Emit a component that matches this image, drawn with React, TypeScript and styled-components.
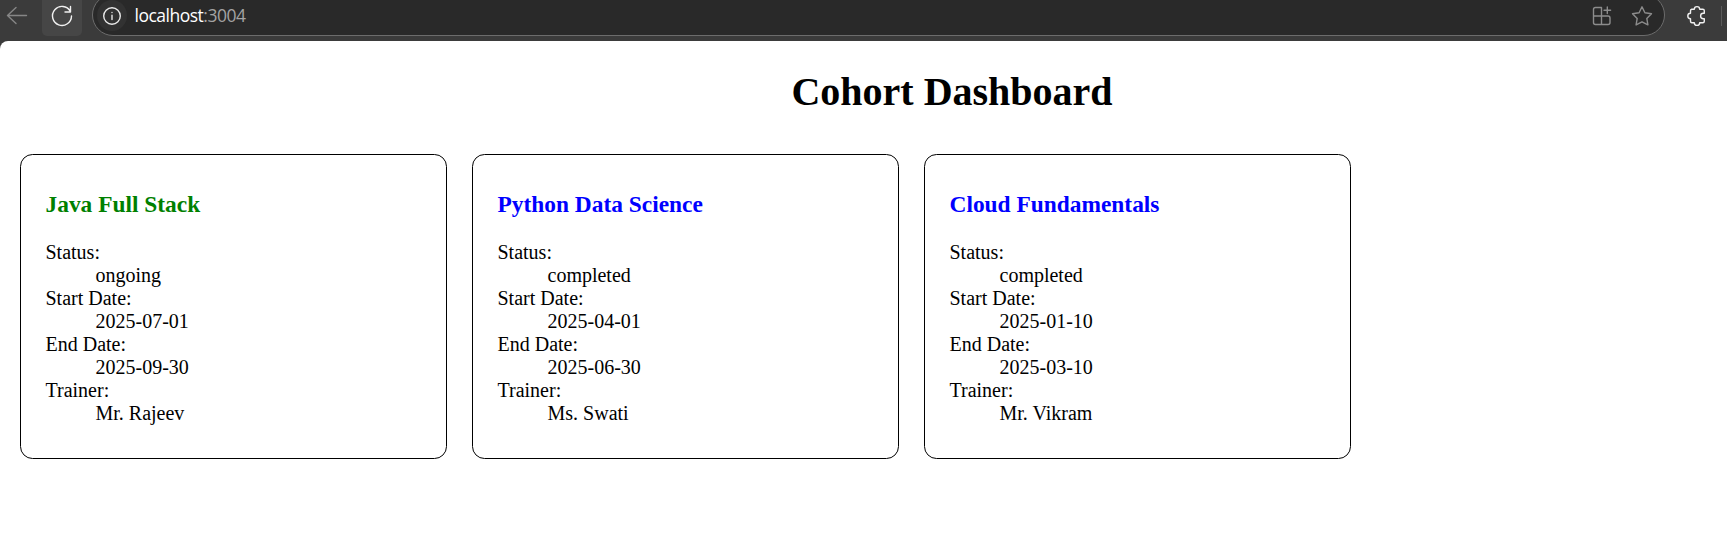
import React from "react";
import styled, { createGlobalStyle } from "styled-components";

const GlobalStyle = createGlobalStyle`
  body { margin: 0; background: #3b3b3b; }
`;

const Window = styled.div`
  height: 544px;
  display: flex;
  flex-direction: column;
  overflow: hidden;
  background: #3b3b3b;
`;

const Toolbar = styled.header`
  height: 41px;
  flex: none;
  display: flex;
  align-items: flex-start;
  overflow: hidden;
`;

const NavButton = styled.div<{ $active?: boolean; $width: number }>`
  width: ${(p) => p.$width}px;
  height: 36px;
  flex: none;
  border-radius: 0 0 5px 5px;
  background: ${(p) => (p.$active ? "#464646" : "transparent")};
`;

const Icon = styled.svg<{ $color: string }>`
  display: block;
  flex: none;
  fill: none;
  stroke: ${(p) => p.$color};
  stroke-width: 1.4;
  stroke-linecap: round;
  stroke-linejoin: round;
`;

const AddressBar = styled.div`
  box-sizing: border-box;
  width: 1573px;
  height: 42px;
  margin: -6px 0 0 10px;
  padding: 5px 6px 0 4px;
  display: flex;
  align-items: flex-start;
  flex: none;
  border: 1px solid #6c6c6c;
  border-radius: 21px;
  background: #292929;
`;

const SiteInfo = styled.div`
  width: 30px;
  height: 31px;
  flex: none;
  border-radius: 50%;
  background: #323232;
`;

const Url = styled.div`
  flex: 1;
  margin-left: 7.5px;
  font: 17.5px/31px "Open Sans", sans-serif;
  letter-spacing: -0.5px;
  color: #fff;
`;

const Port = styled.span`
  color: #a3a3a3;
`;

const Divider = styled.div`
  width: 1px;
  height: 20px;
  margin: 6px 0 0 14px;
  background: #5b5b5b;
`;

const Page = styled.main`
  flex: 1;
  border-top-left-radius: 8px;
  background: #fff;
  color: #000;
  font: 20px/23px "Liberation Serif", serif;
  padding: 28px 10px 0;
`;

const Title = styled.h1`
  margin: 0;
  padding-left: 177px;
  font-size: 40px;
  line-height: 46px;
  text-align: center;
`;

const CardRow = styled.section`
  display: flex;
  gap: 25px;
  padding: 39px 10px 0;
`;

const Card = styled.article`
  box-sizing: border-box;
  width: 427px;
  height: 305px;
  padding: 36px 24.5px 0;
  border: 1px solid #000;
  border-radius: 12.5px;
`;

const CardTitle = styled.h3<{ $color: string }>`
  margin: 0 0 24px;
  font-size: 23.4px;
  line-height: 26px;
  color: ${(p) => p.$color};
`;

const Details = styled.dl`
  margin: 0;
`;

const Term = styled.dt``;

const Value = styled.dd`
  margin: 0 0 0 50px;
`;

const cohorts = [
  { name: "Java Full Stack", status: "ongoing", start: "2025-07-01", end: "2025-09-30", trainer: "Mr. Rajeev" },
  { name: "Python Data Science", status: "completed", start: "2025-04-01", end: "2025-06-30", trainer: "Ms. Swati" },
  { name: "Cloud Fundamentals", status: "completed", start: "2025-01-10", end: "2025-03-10", trainer: "Mr. Vikram" },
];

export default function App() {
  return (
    <Window>
      <GlobalStyle />
      <Toolbar>
        <NavButton $width={42}>
          <Icon $color="#868686" width="42" height="36">
            <path d="M26.5 15.5H7.5M16 7.5L7.5 15.5L16 23.5" />
          </Icon>
        </NavButton>
        <NavButton $width={40} $active>
          <Icon $color="#f0f0f0" width="40" height="36">
            <path d="M28.3 11.3A9.5 9.5 0 1 0 29.5 16M28.5 6.5V12H23" />
          </Icon>
        </NavButton>
        <AddressBar>
          <SiteInfo>
            <Icon $color="#e8e8e8" width="30" height="31">
              <circle cx="15" cy="16" r="8.3" />
              <path d="M15 15.3V19.5M15 12.4V12.5" />
            </Icon>
          </SiteInfo>
          <Url>
            localhost<Port>:3004</Port>
          </Url>
          <Icon $color="#8c8c8c" width="36" height="32">
            <path d="M11.5 7.5H5.5Q3.5 7.5 3.5 9.5V22.5Q3.5 24.5 5.5 24.5H18Q20 24.5 20 22.5V18Q20 16 18 16H3.5M11.5 7.5V24.5M17.3 7V13.6M14 10.3H20.6" />
          </Icon>
          <Icon $color="#8c8c8c" width="32" height="32">
            <path d="M16 6.8L18.9 12.8L25.5 13.7L20.8 18.4L21.9 24.9L16 21.8L10.1 24.9L11.2 18.4L6.5 13.7L13.1 12.8Z" />
          </Icon>
        </AddressBar>
        <Icon $color="#f0f0f0" width="42" height="36">
          <path d="M26.5 9.3H29.3A2.7 2.7 0 0 1 34.7 9.3H37.8Q39.3 9.3 39.3 10.8V13.3H38.3A2.7 2.7 0 0 0 38.3 18.7H39.3V21.2Q39.3 22.7 37.8 22.7H34.7A2.7 2.7 0 0 1 29.3 22.7H27Q25.5 22.7 25.5 21.2V18.7A2.7 2.7 0 0 1 25.5 13.3V10.8Q25.5 9.3 27 9.3" />
        </Icon>
        <Divider />
      </Toolbar>
      <Page>
        <Title>Cohort Dashboard</Title>
        <CardRow>
          {cohorts.map((c) => (
            <Card key={c.name}>
              <CardTitle $color={c.status === "ongoing" ? "green" : "blue"}>
                {c.name}
              </CardTitle>
              <Details>
                <Term>Status:</Term>
                <Value>{c.status}</Value>
                <Term>Start Date:</Term>
                <Value>{c.start}</Value>
                <Term>End Date:</Term>
                <Value>{c.end}</Value>
                <Term>Trainer:</Term>
                <Value>{c.trainer}</Value>
              </Details>
            </Card>
          ))}
        </CardRow>
      </Page>
    </Window>
  );
}
